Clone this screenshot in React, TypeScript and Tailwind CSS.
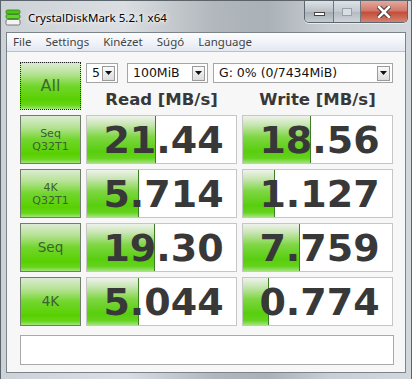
import React from "react";

const rows = [
  { label: ["Seq", "Q32T1"], read: "21.44", rw: 69, write: "18.56", ww: 68 },
  { label: ["4K", "Q32T1"], read: "5.714", rw: 52, write: "1.127", ww: 32 },
  { label: ["Seq"], read: "19.30", rw: 68, write: "7.759", ww: 57 },
  { label: ["4K"], read: "5.044", rw: 52, write: "0.774", ww: 26 },
];

function Arrow() {
  return (
    <div className="ml-auto mr-[2px] flex h-[15px] w-[13px] items-center justify-center border border-[#9a9a9a] bg-[linear-gradient(to_bottom,#fafafa,#dcdcdc)]">
      <svg width="7" height="4" viewBox="0 0 7 4">
        <path d="M0 0H7L3.5 4Z" fill="#111" />
      </svg>
    </div>
  );
}

function Select({ text, w }: { text: string; w: string }) {
  return (
    <div className={`flex h-[20px] items-center border border-[#a5a5a5] bg-white pl-[5px] ${w}`}>
      <span className="text-[12.5px] leading-none text-[#111]">{text}</span>
      <Arrow />
    </div>
  );
}

function ValueCell({ value, width }: { value: string; width: number }) {
  return (
    <div className="relative flex h-[49px] items-center justify-center overflow-hidden border border-[#c6c6c6] bg-white">
      <div
        className="absolute bottom-0 left-0 top-0 border-r border-[#3d7f22] bg-[linear-gradient(to_bottom,#eef2ec_0%,#c9e6b4_18%,#7ed643_45%,#58ce0e_75%,#63d31c_90%,#a4e27f_100%)]"
        style={{ width }}
      />
      <span className="relative pl-[4px] font-['DejaVu_Sans',sans-serif] text-[38px] font-bold leading-none text-[#383838]">
        {value}
      </span>
    </div>
  );
}

const btnGrad =
  "bg-[linear-gradient(to_bottom,#dcebd3_0%,#b4e291_25%,#72d62c_50%,#58d000_80%,#68d61c_92%,#a2e47b_100%)]";

export default function App() {
  return (
    <div className="flex h-[379px] w-[412px] flex-col overflow-hidden border-x border-t border-[#5c646b] bg-[linear-gradient(to_right,#cdd2d7_0%,#dadee2_30%,#b1b7bc_52%,#aab1b7_65%,#c9ced3_80%,#d2d7db_100%)] font-['Noto_Sans',sans-serif]">
      {/* Title bar */}
      <div className="flex h-[31px] shrink-0 items-start">
        <div className="mt-[8px] ml-[4px]">
          <svg width="17" height="17" viewBox="0 0 17 17">
            <rect x="1" y="1" width="14" height="4" rx="1.5" fill="#4cc21a" stroke="#2f7d12" strokeWidth="0.8" />
            <rect x="1" y="5.5" width="14" height="4" rx="1.5" fill="#5fd427" stroke="#2f7d12" strokeWidth="0.8" />
            <rect x="1" y="10.5" width="14" height="5.5" rx="1.5" fill="#f4f4f4" stroke="#6b6b6b" strokeWidth="0.9" />
          </svg>
        </div>
        <div className="ml-[6px] mt-[8px] text-[11.5px] leading-[17px] text-black [text-shadow:0_0_6px_#fff,0_0_3px_#fff]">
          CrystalDiskMark 5.2.1 x64
        </div>
        <div className="ml-auto mr-[3px] flex h-[22px] overflow-hidden rounded-b-[5px] border border-t-0 border-[#5d666e] shadow-[0_1px_0_#e8ecef]">
          <div className="flex w-[29px] items-center justify-center border-r border-[#6e777e] bg-[linear-gradient(to_bottom,#dde2e6,#b9c0c6_50%,#a7afb6_55%,#c5ccd2)]">
            <div className="mt-[5px] h-[4px] w-[11px] border border-[#444] bg-white" />
          </div>
          <div className="flex w-[27px] items-center justify-center border-r border-[#6e777e] bg-[linear-gradient(to_bottom,#dde2e6,#c3c9ce_50%,#b4bbc1_55%,#cfd5da)]">
            <div className="h-[8px] w-[10px] border border-[#9aa2a8] bg-[#d9dee2]" />
          </div>
          <div className="flex w-[46px] items-center justify-center bg-[linear-gradient(to_bottom,#e4a99d,#d3786a_45%,#c24f3b_55%,#d7836f)]">
            <svg width="14" height="12" viewBox="0 0 14 12">
              <path d="M2 1L12 11M12 1L2 11" stroke="#3a3a3a" strokeWidth="4.5" strokeLinecap="square" />
              <path d="M2 1L12 11M12 1L2 11" stroke="#fff" strokeWidth="2.6" strokeLinecap="square" />
            </svg>
          </div>
        </div>
      </div>

      {/* Client */}
      <div className="mx-[5px] mb-[6px] flex flex-1 flex-col border border-[#7b838b] bg-[#f7f7f7]">
        {/* Menu bar */}
        <div className="flex h-[19px] shrink-0 items-center gap-[14px] border-b border-[#b9c0cd] bg-[linear-gradient(to_bottom,#fdfdfe,#eef1f7_60%,#e3e8f1)] pl-[6px] text-[11.5px] leading-none text-[#444]">
          <span>File</span>
          <span>Settings</span>
          <span>Kinézet</span>
          <span>Súgó</span>
          <span>Language</span>
        </div>

        {/* Content */}
        <div className="pl-[13px] pt-[10px] font-['DejaVu_Sans',sans-serif]">
          <div className="grid grid-cols-[61px_151px_151px] gap-x-[5px] gap-y-[5px]">
            {/* All button */}
            <div className={`flex h-[48px] items-center justify-center border border-dotted border-[#222] ${btnGrad}`}>
              <span className="font-['DejaVu_Sans',sans-serif] text-[16px] leading-none text-[#3b6a2c]">All</span>
            </div>
            <div className="col-span-2 flex h-[48px] flex-col">
              <div className="mt-[1px] flex h-[20px] items-center">
                <Select text="5" w="w-[33px]" />
                <div className="ml-[9px]">
                  <Select text="100MiB" w="w-[81px]" />
                </div>
                <div className="ml-[5px]">
                  <Select text="G: 0% (0/7434MiB)" w="w-[180px]" />
                </div>
              </div>
              <div className="grid flex-1 grid-cols-[151px_151px] items-end gap-x-[5px]">
                <div className="text-center text-[16.5px] font-bold leading-[20px] text-[#383838]">Read [MB/s]</div>
                <div className="text-center text-[16.5px] font-bold leading-[20px] text-[#383838]">Write [MB/s]</div>
              </div>
            </div>

            {rows.map((r, i) => (
              <React.Fragment key={i}>
                <div
                  className={`flex h-[49px] flex-col items-center justify-center border border-[#707d6a] ${btnGrad} text-[#3d5f33]`}
                >
                  {r.label.length === 2 ? (
                    <>
                      <span className="text-[11px] leading-[13px]">{r.label[0]}</span>
                      <span className="text-[11px] leading-[13px]">{r.label[1]}</span>
                    </>
                  ) : (
                    <span className="text-[13.5px] leading-none">{r.label[0]}</span>
                  )}
                </div>
                <ValueCell value={r.read} width={r.rw} />
                <ValueCell value={r.write} width={r.ww} />
              </React.Fragment>
            ))}
          </div>
          <div className="mt-[9px] h-[30px] w-[374px] border border-[#a9a9a9] bg-white" />
        </div>
      </div>
    </div>
  );
}
